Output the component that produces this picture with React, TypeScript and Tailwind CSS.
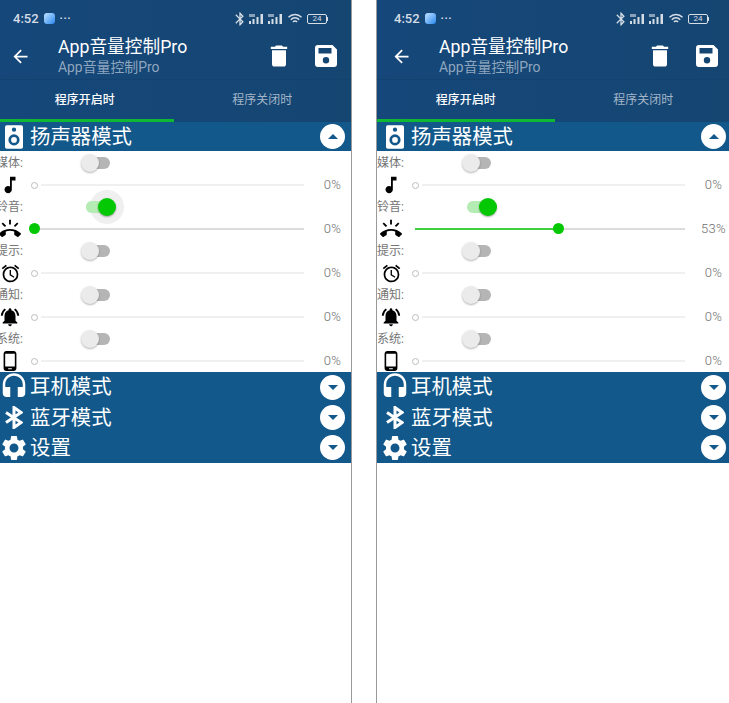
import { MdArrowBack, MdDelete, MdSettings, MdBluetooth, MdMusicNote, MdAccessAlarm, MdNotificationsActive, MdPhoneAndroid, MdRingVolume, MdHeadset } from "react-icons/md";
import type { ReactNode } from "react";

const font = "font-['Roboto','Noto_Sans_CJK_SC',sans-serif]";

const SpeakerIcon = () => (
  <svg width="18" height="26" viewBox="0 0 20 26">
    <path
      fillRule="evenodd"
      fill="#fff"
      d="M2 0h16a2 2 0 0 1 2 2v22a2 2 0 0 1-2 2H2a2 2 0 0 1-2-2V2a2 2 0 0 1 2-2zM10 2.500a2.400 2.400 0 1 0 0 4.800 2.400 2.400 0 0 0 0-4.800zM10 10a6.200 6.200 0 1 0 0 12.400 6.200 6.200 0 0 0 0-12.400zM10 13a3.200 3.200 0 1 1 0 6.400 3.200 3.200 0 0 1 0-6.400z"
    />
  </svg>
);

const BluetoothIcon = () => (
  <svg width="18" height="23" viewBox="0 0 18 23" fill="none" stroke="#fff" strokeWidth="3">
    <path d="M1 6.500l15 10-7 5V1.500l7 5-15 10" />
  </svg>
);

const SaveIcon = () => (
  <svg width="22" height="22" viewBox="0 0 22 22">
    <path
      fillRule="evenodd"
      fill="#fff"
      d="M3 0h14.500L22 4.500V19a3 3 0 0 1-3 3H3a3 3 0 0 1-3-3V3a3 3 0 0 1 3-3zM3.500 3v5.500h13V3zM11 12a3.200 3.200 0 1 0 0 6.400 3.200 3.200 0 0 0 0-6.400z"
    />
  </svg>
);

const StatusIcons = () => (
  <div className="flex items-center gap-[4px] text-[#d5dde6]">
    <MdBluetooth size={16} className="mr-[-3px]" />
    {[0, 1].map((i) => (
      <svg key={i} width="15" height="12" viewBox="0 0 15 12" fill="currentColor">
        <rect x="0" y="8" width="2" height="3" />
        <rect x="3.500" y="6" width="2" height="5" />
        <rect x="7.500" y="4" width="2" height="7" />
        <rect x="11.500" y="1" width="2.500" height="10" />
        <rect x="0" y="1" width="6" height="3" opacity="0.6" />
      </svg>
    ))}
    <svg width="16" height="12" viewBox="0 0 15 12" fill="none" stroke="currentColor" strokeWidth="1.500">
      <path d="M1 4.200a9 9 0 0 1 13 0M3.300 6.700a5.600 5.600 0 0 1 8.400 0M5.500 9a2.600 2.600 0 0 1 4 0" />
    </svg>
    <div className="flex items-center">
      <div className="flex h-[10px] w-[20px] items-center justify-center rounded-[2px] border border-[#d5dde6] text-[8px] leading-none">
        24
      </div>
      <div className="h-[4px] w-[1px] bg-[#d5dde6]" />
    </div>
  </div>
);

const Toggle = ({ on, ripple }: { on?: boolean; ripple?: boolean }) => (
  <div className="relative ml-[90px] h-[12px] w-[24px]">
    <div className={`h-full w-full rounded-full ${on ? "bg-[#b4ecb4]" : "bg-[#b5b5b5]"}`} />
    {ripple && <div className="absolute left-[4px] top-[-11px] h-[34px] w-[34px] rounded-full bg-[#efefef]" />}
    {ripple && <div className="absolute left-0 top-0 h-full w-[20px] rounded-full bg-[#b4ecb4]" />}
    {on ? (
      <div className="absolute left-[12px] top-[-3px] h-[18px] w-[18px] rounded-full bg-[#03c803] shadow-[0_1px_2px_rgba(0,0,0,0.35)]" />
    ) : (
      <div className="absolute left-[-5px] top-[-3px] h-[18px] w-[18px] rounded-full bg-[#ebebeb] shadow-[0_1px_2px_rgba(0,0,0,0.3)]" />
    )}
  </div>
);

const Slider = ({ active, value }: { active?: boolean; value: number }) => (
  <div className="relative h-[2px] w-[270px]">
    {active ? (
      <>
        <div className="h-full w-full bg-[#dcdcdc]" />
        <div className="absolute left-0 top-0 h-full bg-[#3fd03f]" style={{ width: `${value}%` }} />
        <div
          className="absolute top-[-5px] ml-[-5.5px] h-[11px] w-[11px] rounded-full bg-[#03c803]"
          style={{ left: `${value}%` }}
        />
      </>
    ) : (
      <>
        <div className="ml-[7px] h-full bg-[#f0f0f0]" />
        <div className="absolute left-[-3.5px] top-[-2.5px] h-[7px] w-[7px] rounded-full border-[1.5px] border-[#bdbdbd] bg-white" />
      </>
    )}
  </div>
);

const Row = ({
  label,
  icon,
  on,
  ripple,
  active,
  value = 0,
}: {
  label: string;
  icon: ReactNode;
  on?: boolean;
  ripple?: boolean;
  active?: boolean;
  value?: number;
}) => (
  <div>
    <div className="flex h-[22px] items-center">
      <span className="w-0 whitespace-nowrap text-[12px] text-[#757575]">{label}</span>
      <Toggle on={on} ripple={ripple} />
    </div>
    <div className="flex h-[22px] items-center">
      <div className="flex w-[28px] flex-none justify-center text-black">{icon}</div>
      <div className="ml-[10px]">
        <Slider active={active} value={value} />
      </div>
      <span className="w-[47px] flex-none pl-[10px] text-center text-[13px] font-light tracking-[0.3px] text-[#707070]">
        {value}%
      </span>
    </div>
  </div>
);

const SectionHeader = ({
  icon,
  title,
  open,
  h = "h-[30px]",
}: {
  icon: ReactNode;
  title: string;
  open?: boolean;
  h?: string;
}) => (
  <div className={`flex items-center bg-[#12588a] ${h}`}>
    <div className="flex w-[36px] flex-none justify-center text-white">{icon}</div>
    <span className="ml-[-2px] pt-[1px] text-[20.400px] leading-none text-white">{title}</span>
    <div className="ml-auto mr-[6px] flex h-[25px] w-[25px] items-center justify-center rounded-full bg-white">
      <div
        className={`h-0 w-0 border-x-[5px] border-x-transparent ${
          open ? "border-b-[5px] border-b-[#12588a]" : "border-t-[5px] border-t-[#12588a]"
        }`}
      />
    </div>
  </div>
);

const Phone = ({ ringValue, ripple }: { ringValue: number; ripple?: boolean }) => (
  <div className={`w-[355px] flex-none ${font}`}>
    <div className="h-[122px] bg-[#15477a] bg-gradient-to-r from-[#15477a] to-[#154672]">
      <div className="flex h-[36px] items-center justify-between pl-[17px] pr-[23px] pt-[1px]">
        <div className="flex items-center text-[#d5dde6]">
          <span className="text-[13px] font-medium">4:52</span>
          <div className="ml-[5px] h-[11px] w-[11px] rounded-[3px] bg-gradient-to-br from-[#bfe3ff] to-[#1f86ee]" />
          <span className="ml-[5px] text-[11px] font-bold leading-none tracking-[0.5px]">···</span>
        </div>
        <StatusIcons />
      </div>
      <div className="flex h-[44px] items-center border-b border-[#134270]">
        <div className="flex w-[48px] flex-none justify-center pb-[3px] text-white">
          <MdArrowBack size={21} />
        </div>
        <div className="ml-[14px] flex flex-col pb-[4px]">
          <span className="text-[17.700px] leading-[22px] text-white">App音量控制Pro</span>
          <span className="text-[13.900px] leading-[18px] text-[#8fa6bf]">App音量控制Pro</span>
        </div>
        <div className="ml-auto flex items-center gap-[22px] pb-[4px] pr-[14px]">
          <MdDelete size={28} className="text-white" />
          <SaveIcon />
        </div>
      </div>
      <div className="relative flex h-[42px] pb-[3px] text-[12px]">
        <div className="flex w-1/2 items-center justify-center font-medium text-white">程序开启时</div>
        <div className="flex w-1/2 items-center justify-center text-[#a4b6c9]">程序关闭时</div>
        <div className="absolute bottom-0 left-0 h-[3px] w-[178px] bg-[#0fb832]" />
      </div>
    </div>
    <SectionHeader icon={<SpeakerIcon />} title="扬声器模式" open h="h-[29px]" />
    <div className="pt-px">
      <Row label="媒体:" icon={<MdMusicNote size={22} />} />
      <Row label="铃音:" icon={<MdRingVolume size={22} />} on ripple={ripple} active value={ringValue} />
      <Row label="提示:" icon={<MdAccessAlarm size={21} />} />
      <Row label="通知:" icon={<MdNotificationsActive size={22} />} />
      <Row label="系统:" icon={<MdPhoneAndroid size={22} />} />
    </div>
    <SectionHeader icon={<MdHeadset size={30} />} title="耳机模式" />
    <SectionHeader icon={<BluetoothIcon />} title="蓝牙模式" h="h-[30.500px]" />
    <SectionHeader icon={<MdSettings size={30} />} title="设置" h="h-[30.500px]" />
  </div>
);

export default function App() {
  return (
    <div className="flex h-[703px] w-[729px] overflow-hidden bg-white">
      <div className="flex w-[352px] flex-none justify-end overflow-hidden border-r border-[#9a9a9a]">
        <Phone ringValue={0} ripple />
      </div>
      <div className="w-[24px] flex-none" />
      <div className="w-[353px] flex-none overflow-hidden border-l border-[#9a9a9a]">
        <Phone ringValue={53} />
      </div>
    </div>
  );
}
